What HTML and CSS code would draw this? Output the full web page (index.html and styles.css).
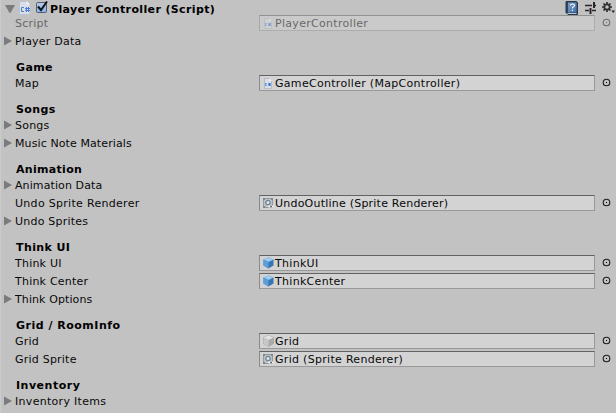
FILE: index.html
```html
<!DOCTYPE html>
<html lang="en">
<head>
<meta charset="utf-8">
<title>Player Controller (Script)</title>
<link rel="stylesheet" href="styles.css">
</head>
<body>
<svg class="defs" width="0" height="0">
  <defs>
    <linearGradient id="book" x2="1" y2="1"><stop stop-color="#7fa0c4"/><stop offset="1" stop-color="#3f6fa8"/></linearGradient>
    <linearGradient id="check" x2="0" y2="1"><stop stop-color="#b9cbe2"/><stop offset="1" stop-color="#86b2e9"/></linearGradient>
    <symbol id="script" viewBox="0 0 12 14"><path d="M.5.5h7.500l3 3v10H.5z" fill="#d9dfe8" stroke="#bcc3ce"/><path d="M7.500 0v3.500H11z" fill="#f2f4f7"/><path d="M5 6.500H2.500v4H5M7.500 6v5M9.500 6v5M6 7.500h5M6 9.500h5" fill="none" stroke="#4b7fd6"/></symbol>
    <symbol id="small-script" viewBox="0 0 8 11"><path d="M.5.5h5l2 2v8h-7z" fill="#d9e0ea" stroke="#b4bcc8"/><path d="M5 0v3h3z" fill="#f0f2f5"/><path d="M1 5h2v1H2v1h1v1H1z" fill="#6f9be0"/><path d="M4 5h3v3H4z" fill="#6f9be0"/><path d="M5 5h1v3H5z" fill="#4777c8"/></symbol>
    <symbol id="cube" viewBox="0 0 12 12"><path d="M5.500 .5 10.500 2.500v6L5.500 11.500.5 8.500v-6z" fill="#3876b2"/><path d="M5.500 .5 10.500 2.500 5.500 5 .5 2.500z" fill="#a0cef0"/><path d="M.5 2.500 5.500 5v6.500L.5 8.500z" fill="#5a9edb"/></symbol>
    <symbol id="object" viewBox="0 0 12 12"><path d="M5.500 .5 10.500 2.500v6L5.500 11.500.5 8.500v-6z" fill="#aaa" stroke="#999" stroke-width=".6"/><path d="M5.500 .5 10.500 2.500 5.500 5 .5 2.500z" fill="#e3e3e3"/><path d="M.5 2.500 5.500 5v6.500L.5 8.500z" fill="#c8c8c8"/></symbol>
    <symbol id="sprite" viewBox="0 0 12 12"><path d="M.5 1.500h9v9h-9z" fill="#bcc2c6" stroke="#93999d"/><path d="M0 1h2v2H0zM8 1h2v2H8zM0 9h2v2H0z" fill="#7f868b"/><circle cx="5" cy="5.500" r="2.200" fill="#dce5eb" stroke="#6b8594" stroke-width="1.200"/><path d="M4.500 9.500Q7.500 7 11.500 9.500 7.500 12 4.500 9.500" fill="#f3f3f3"/><circle cx="8" cy="9.500" r="1" fill="#53616b"/></symbol>
    <symbol id="picker" viewBox="0 0 9 9"><circle cx="4.500" cy="4.500" r="3.300" fill="none" stroke="#1c1c1c" stroke-width="1.100"/><path d="M4 4h1v1H4z" fill="#000"/></symbol>
    <symbol id="closed" viewBox="0 0 8 10"><path d="M0 .5 8 5 0 9.500z" fill="#7b7b7b"/></symbol>
  </defs>
</svg>
<main class="inspector">
  <header class="title">
    <svg class="open" viewBox="0 0 10 8"><path d="M0 0h10L5.500 8h-1z" fill="#7b7b7b"/></svg>
    <svg class="file"><use href="#script"/></svg>
    <svg class="check" viewBox="0 0 14 14"><rect x="1.500" y="2.500" width="10" height="10" rx="1" fill="url(#check)" stroke="#525d6c"/><path d="M3 6.500 6 10 12 1.500" fill="none" stroke="#0b1422" stroke-width="2"/></svg>
    <h1>Player Controller (Script)</h1>
    <svg class="help" viewBox="0 0 13 14"><path d="M1 .5h10.500l1 1v12H3l-2-2z" fill="#304563" stroke="#29384e"/><path d="M3 1.500h8.500v10H3z" fill="url(#book)"/><path d="M2.500 12.500h9" stroke="#b9c6d6"/><path d="M5.500 4.500q0-1.500 2-1.500t2 1.500q0 1-2 2v1M7.500 8.700v1.300" fill="none" stroke="#fff" stroke-width="1.100"/></svg>
    <svg class="preset" viewBox="0 0 11 12"><path d="M0 3.500h7M9 3.500h2M0 8.500h4M7 8.500h4" stroke="#262626" stroke-width="1.700"/><path d="M9 0v6M5.500 6v6" stroke="#262626" stroke-width="2"/></svg>
    <svg class="gear" viewBox="0 0 13 12"><circle cx="5" cy="5" r="2.700" fill="none" stroke="#303030" stroke-width="1.800"/><path d="M5 0v2M5 8v2M0 5h2M8 5h2M1.500 1.500l1.400 1.400M7.100 7.100l1.400 1.400M1.500 8.500l1.400-1.400M7.100 2.900l1.400-1.400" stroke="#303030" stroke-width="1.700"/><path d="M9.500 8.500H13L11.200 11z" fill="#222"/></svg>
  </header>
  <div class="row disabled"><span class="label">Script</span><div class="field"><svg class="small-file"><use href="#small-script"/></svg><span>PlayerController</span></div><svg class="picker"><use href="#picker"/></svg></div>
  <div class="row"><svg class="closed"><use href="#closed"/></svg><span class="label">Player Data</span></div>

  <h2>Game</h2>
  <div class="row"><span class="label">Map</span><div class="field"><svg class="small-file"><use href="#small-script"/></svg><span>GameController (MapController)</span></div><svg class="picker"><use href="#picker"/></svg></div>

  <h2>Songs</h2>
  <div class="row"><svg class="closed"><use href="#closed"/></svg><span class="label">Songs</span></div>
  <div class="row"><svg class="closed"><use href="#closed"/></svg><span class="label tight">Music Note Materials</span></div>

  <h2 class="tight">Animation</h2>
  <div class="row"><svg class="closed"><use href="#closed"/></svg><span class="label tight">Animation Data</span></div>
  <div class="row"><span class="label wide">Undo Sprite Renderer</span><div class="field"><svg class="icon"><use href="#sprite"/></svg><span class="tight-value">UndoOutline (Sprite Renderer)</span></div><svg class="picker"><use href="#picker"/></svg></div>
  <div class="row"><svg class="closed"><use href="#closed"/></svg><span class="label">Undo Sprites</span></div>

  <h2>Think UI</h2>
  <div class="row"><span class="label">Think UI</span><div class="field"><svg class="icon"><use href="#cube"/></svg><span>ThinkUI</span></div><svg class="picker"><use href="#picker"/></svg></div>
  <div class="row"><span class="label">Think Center</span><div class="field"><svg class="icon"><use href="#cube"/></svg><span>ThinkCenter</span></div><svg class="picker"><use href="#picker"/></svg></div>
  <div class="row"><svg class="closed"><use href="#closed"/></svg><span class="label tight">Think Options</span></div>

  <h2 class="wide-heading">Grid / RoomInfo</h2>
  <div class="row"><span class="label">Grid</span><div class="field"><svg class="icon"><use href="#object"/></svg><span>Grid</span></div><svg class="picker"><use href="#picker"/></svg></div>
  <div class="row"><span class="label">Grid Sprite</span><div class="field"><svg class="icon"><use href="#sprite"/></svg><span>Grid (Sprite Renderer)</span></div><svg class="picker"><use href="#picker"/></svg></div>

  <h2 class="wide-heading">Inventory</h2>
  <div class="row"><svg class="closed"><use href="#closed"/></svg><span class="label wide">Inventory Items</span></div>
</main>
</body>
</html>
```
FILE: styles.css
```css
* { box-sizing: border-box; }
body {
  margin: 0;
  height: 413px;
  overflow: hidden;
  background: #c2c2c2;
  color: #090909;
  font: 11px/16px "DejaVu Sans", sans-serif;
  letter-spacing: .3px;
}
svg { display: block; flex: none; }
.defs { position: absolute; }
.inspector { height: 413px; border-left: 1px solid #cbcbcb; }
.title { display: flex; height: 14px; padding-left: 4px; align-items: flex-start; }
.open { width: 10px; height: 8px; margin-top: 5px; }
.file { width: 12px; height: 14px; margin: 1px 0 0 4px; }
.check { width: 14px; height: 14px; margin: 0 0 0 4px; }
h1, h2 { margin: 0; font-size: 11px; font-weight: bold; color: #000; white-space: nowrap; letter-spacing: .4px; }
h1 { flex: 1; margin-left: 1px; line-height: 20px; letter-spacing: .37px; }
h2 { height: 24px; padding: 10px 0 0 15px; line-height: 16px; }
.help { width: 13px; height: 14px; margin: 1px 7px 0 0; }
.preset { width: 11px; height: 12px; margin: 2px 6px 0 0; }
.gear { width: 13px; height: 12px; margin: 2px 1px 0 0; }
.row {
  display: grid;
  grid-template-columns: 14px 244px 336px 21px;
  height: 18px;
  align-items: center;
}
.label { grid-column: 2; grid-row: 1; padding-top: 2px; white-space: nowrap; letter-spacing: .22px; }
.tight { letter-spacing: .1px; }
h2.tight { letter-spacing: .3px; }
.wide { letter-spacing: .3px; }
.wide-heading { letter-spacing: .5px; }
.closed { grid-column: 1; grid-row: 1; width: 8px; height: 10px; margin-left: 3px; }
.field {
  grid-column: 3;
  display: flex;
  align-items: center;
  height: 16px;
  padding-left: 3px;
  background: #d3d3d3;
  border: 1px solid #999;
  border-top-color: #626262;
  border-left-color: #8b8b8b;
  white-space: nowrap;
}
.field span { padding-top: 2px; }
.field .tight-value { letter-spacing: .22px; }
.icon { width: 12px; height: 12px; }
.small-file { width: 8px; height: 11px; margin: 0 3px 0 1px; }
.picker { grid-column: 4; width: 9px; height: 9px; margin: 0 0 1px 7px; }
.disabled .label, .disabled .field, .disabled .picker { opacity: .5; }
```
